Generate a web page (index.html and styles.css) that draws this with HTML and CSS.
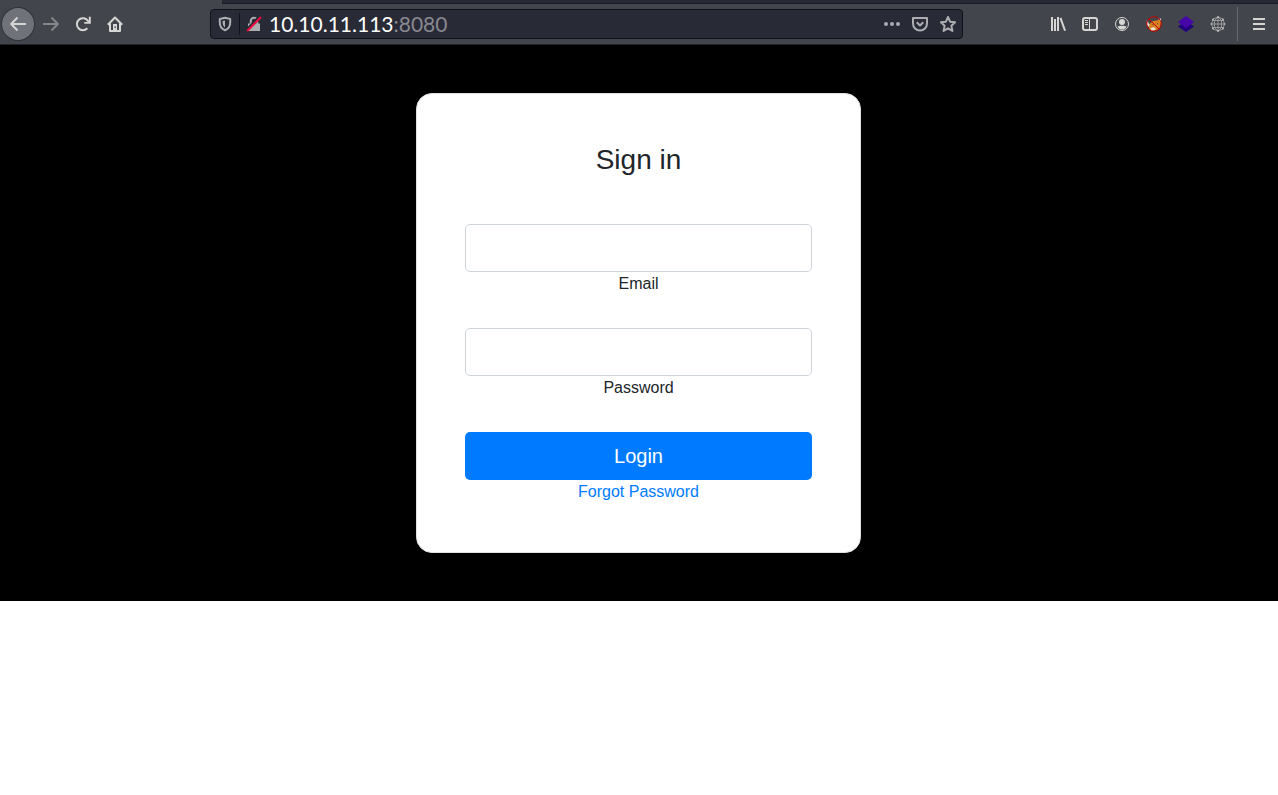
FILE: index.html
```html
<!DOCTYPE html>
<html lang="en">
<head>
<meta charset="utf-8">
<title>Sign in</title>
<link rel="stylesheet" href="styles.css">
</head>
<body>
<header class="chrome">
  <div class="tab-strip"></div>
  <nav class="toolbar" aria-label="Browser toolbar">
    <div class="group">
      <button class="tool back" aria-label="Back"><svg viewBox="0 0 16 16" class="stroke"><path d="M16 8H1.500M7.500 1.500 1.200 8l6.300 6.500"/></svg></button>
      <button class="tool" aria-label="Forward" disabled><svg viewBox="0 0 16 16" class="stroke"><path d="M0 8h14.500M8.500 1.500l6.300 6.500-6.300 6.500"/></svg></button>
      <button class="tool" aria-label="Reload"><svg viewBox="0 0 16 16" class="stroke"><path d="M12.300 12.300A6 6 0 1 1 13 5"/><path class="solid" d="M15.800.8v7H9.300V6h2.500L13.800 4V.8z"/></svg></button>
      <button class="tool" aria-label="Home"><svg viewBox="0 0 16 16" class="stroke"><path d="M.8 8.800 8 1.500l7.200 7.300M3 7.500V15h10V7.500"/><path class="solid" d="M6 8h4v7H6z"/><path class="hole" d="M7.500 10.500h1.300V12H7.500z"/></svg></button>
    </div>
    <div class="url-bar">
      <button class="mini" aria-label="Tracking protection"><svg viewBox="0 0 16 16" class="stroke"><path d="M8 1.800 13.200 3v3.500c0 3.800-2 6.500-5.200 7.700-3.200-1.200-5.200-3.900-5.200-7.700V3z"/><path class="solid" d="M8 4.500v7C6.300 10.300 5.600 8.500 5.600 6.500V5z"/></svg></button>
      <span class="divider"></span>
      <button class="mini lock" aria-label="Connection not secure"><svg viewBox="0 0 16 16" class="stroke"><path d="M4.800 8V5a3.200 3.200 0 0 1 6.400 0v3"/><path class="solid" d="M2 7.500h12V15H2z"/><path class="gap" d="M0 14 13.500 0"/><path class="slash" d="M1.200 15 15 1"/></svg></button>
      <div class="address" role="textbox" aria-label="Address">10.10.11.113<span class="port">:8080</span></div>
      <button class="mini action" aria-label="Page actions"><svg viewBox="0 0 16 16"><circle cx="2" cy="8" r="2"/><circle cx="8" cy="8" r="2"/><circle cx="14" cy="8" r="2"/></svg></button>
      <button class="mini action" aria-label="Save to Pocket"><svg viewBox="0 0 16 16" class="stroke"><path d="M1 2h14v5.500a7 7 0 0 1-14 0z"/><path d="m4.700 6.200 3.300 3.300 3.300-3.300"/></svg></button>
      <button class="mini action" aria-label="Bookmark this page"><svg viewBox="0 0 16 16" class="stroke"><path d="m8 1 2.100 4.700 5 .6-3.700 3.500 1 5.100L8 12.300l-4.400 2.600 1-5.100L.9 6.300l5-.6z"/></svg></button>
    </div>
    <div class="group">
      <button class="tool" aria-label="Library"><svg viewBox="0 0 16 16"><path d="M1 1h2v14H1zM4 3h2v12H4zM7 1h2v14H7zM9.500 2.200l1.900-.6L16 14.400l-1.900.6z"/></svg></button>
      <button class="tool" aria-label="Sidebars"><svg viewBox="0 0 16 16" class="stroke"><rect x="1" y="2" width="14" height="12" rx="2"/><path class="thin" d="M7.500 2v12M3 4.500h3M3 6.500h3M3 8.500h3"/></svg></button>
      <button class="tool" aria-label="Account"><svg viewBox="0 0 16 16"><circle class="ring" cx="8" cy="8" r="6.500"/><circle cx="8" cy="6" r="3"/><path d="M3.500 10.500c1.500-1 7.500-1 9 0C11.500 13 9.800 13.600 8 13.600S4.500 13 3.500 10.500z"/></svg></button>
      <button class="tool" aria-label="FoxyProxy"><svg viewBox="0 0 16 16"><path fill="#d8801f" d="M3 8.500 7 5l4-.5L14 3l1 4-1.500 5-3.500 2.500-5 .5-2-3z"/><path fill="#e8e2d8" d="m.8 4 2.700 4.500L3 11l-2-2zM12.500 3l2.500-.5V6zM4 12.500l4-1.500 2 2.500-4 1.500z"/><path fill="#5c4531" d="M6 8.500 7.500 8v1.500zM11 7.500l1-1v2z"/><circle cx="8" cy="8" r="7.300" fill="none" stroke="#c80000"/><path d="m3 3 10 10" stroke="#c80000"/></svg></button>
      <button class="tool" aria-label="Layers extension"><svg viewBox="0 0 16 16"><path fill="#20007d" d="M0 10.500 8 5l8 5.500L8 16z"/><path fill="#4606a8" d="M0 6 8 0l8 6-8 6z"/></svg></button>
      <button class="tool globe" aria-label="Network extension"><svg viewBox="0 0 16 16"><path class="mesh" d="M8 1 13 3l1.500 5-1.500 5-5 2-5-2-1.500-5L3 3zM8 1v14M1.500 8h13M2.500 4.500h11M2.500 11.500h11M8 1 4.500 4.500v7L8 15l3.500-3.500v-7z"/><path class="nodes" d="M8 1h.01M3 3.500h.01M13 3.500h.01M1.500 8h.01M14.500 8h.01M3 12.500h.01M13 12.500h.01M8 15h.01"/></svg></button>
      <span class="separator"></span>
      <button class="tool" aria-label="Open menu"><svg viewBox="0 0 16 16"><path d="M2 2h12v2H2zM2 7h12v2H2zM2 12h12v2H2z"/></svg></button>
    </div>
  </nav>
</header>
<main class="page">
  <form class="card">
    <h1 class="title">Sign in</h1>
    <div class="field">
      <input class="control" type="email" id="email">
      <label for="email">Email</label>
    </div>
    <div class="field">
      <input class="control" type="password" id="password">
      <label for="password">Password</label>
    </div>
    <button class="login" type="submit">Login</button>
    <a class="forgot" href="#forgot">Forgot Password</a>
  </form>
</main>
</body>
</html>
```

FILE: styles.css
```css
* { box-sizing: border-box; }

body {
  margin: 0;
  background: #fff;
  color: #212529;
  font: 16px/24px "Liberation Sans", Arial, sans-serif;
}

button { border: 0; padding: 0; font: inherit; }

/* Browser chrome */
.chrome {
  background: #42454c;
  border-bottom: 1px solid #202329;
}

.tab-strip {
  height: 4px;
  margin-left: 222px;
  background: #252933;
  border-bottom: 1px solid #191c24;
}

.toolbar {
  display: flex;
  align-items: center;
  gap: 79px;
  height: 40px;
  padding: 0 3px 0 2px;
}

.group { display: flex; align-items: center; }

.tool {
  display: flex;
  align-items: center;
  justify-content: center;
  width: 32px;
  height: 32px;
  background: none;
  color: #d5d5d3;
}

.tool:disabled { color: #84868a; }

.back {
  margin-right: 1px;
  border-radius: 50%;
  background: #70727a;
  box-shadow: 0 0 0 1px #303238;
}

svg { display: block; width: 16px; height: 16px; fill: currentColor; }
.stroke { fill: none; stroke: currentColor; stroke-width: 2; stroke-linejoin: round; }
.stroke .solid { fill: currentColor; stroke: none; }
.stroke .thin { stroke-width: 1; }
.stroke .hole { fill: #42454c; stroke: none; }
.ring { fill: none; stroke: currentColor; stroke-width: 1; }
.globe { color: #b4b4b4; }
.mesh { fill: none; stroke: currentColor; stroke-width: 0.7; }
.nodes { fill: none; stroke: currentColor; stroke-width: 2; stroke-linecap: round; }

.separator {
  width: 1px;
  height: 34px;
  margin: 0 5px 0 3px;
  background: #686a70;
}

.url-bar {
  display: flex;
  flex: 1;
  align-items: center;
  min-width: 0;
  height: 30px;
  padding: 0 6px;
  border: 1px solid #101219;
  border-radius: 4px;
  background: #282a36;
}

.mini {
  display: flex;
  align-items: center;
  justify-content: center;
  width: 16px;
  height: 28px;
  background: none;
  color: #acadb1;
}

.lock { margin-left: 6px; }
.gap { stroke: #282a36; }
.slash { stroke: #f2063e; }

.divider {
  width: 1px;
  height: 22px;
  margin-left: 6px;
  background: #11131a;
}

.address {
  flex: 1;
  min-width: 0;
  padding-left: 7px;
  overflow: hidden;
  color: #fff;
  font: 21px/28px Lato, sans-serif;
  white-space: nowrap;
}

.port { color: #888990; }
.action { margin-left: 12px; }

/* Sign-in page */
.page {
  display: flex;
  justify-content: center;
  padding: 48px 16px 48px 15px;
  background: #000;
}

.card {
  display: flex;
  flex-direction: column;
  width: 100%;
  max-width: 445px;
  padding: 48px;
  border: 1px solid #dfdfdf;
  border-radius: 16px;
  background: #fff;
  text-align: center;
}

.title {
  margin: 0 0 46px;
  font-size: 28px;
  font-weight: 400;
  line-height: 36px;
}

.field {
  display: flex;
  flex-direction: column;
  margin-bottom: 32px;
}

.control {
  width: 100%;
  height: 48px;
  padding: 8px 16px;
  border: 1px solid #ced4da;
  border-radius: 5px;
  background: #fff;
  font: 20px/30px "Liberation Sans", Arial, sans-serif;
}

.login {
  height: 48px;
  border-radius: 5px;
  background: #007bff;
  color: #fff;
  font-size: 20px;
  line-height: 30px;
}

.forgot { align-self: center; color: #007bff; text-decoration: none; }
```
